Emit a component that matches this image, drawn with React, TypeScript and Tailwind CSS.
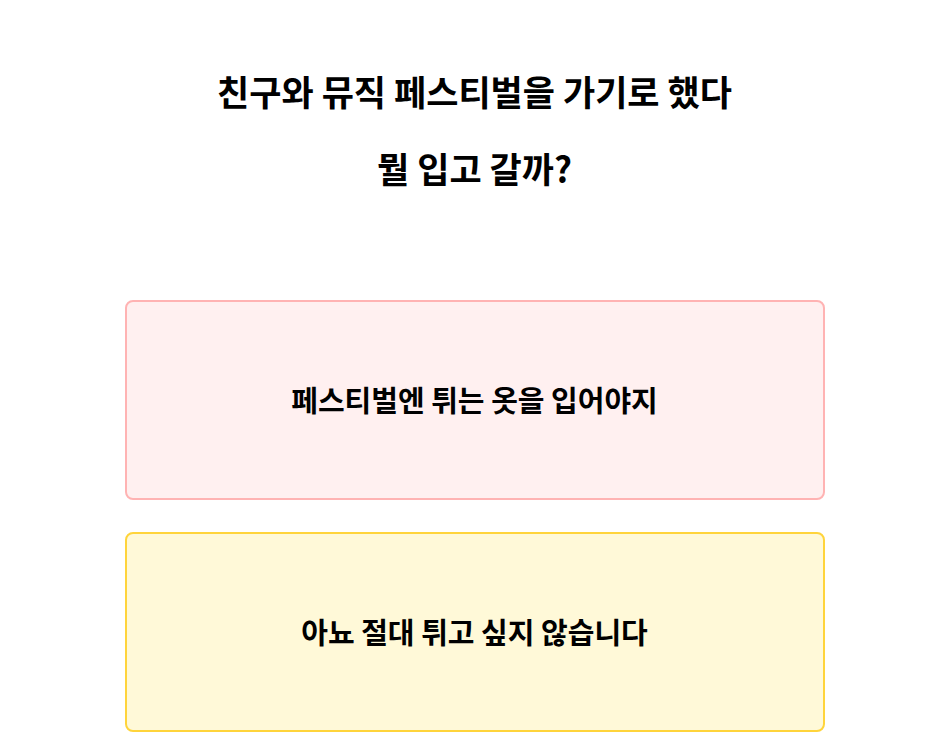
const choices = [
  {
    id: "a",
    label: "페스티벌엔 튀는 옷을 입어야지",
    tone: "border-[#ffb3b3] bg-[#fff0f0]",
  },
  {
    id: "b",
    label: "아뇨 절대 튀고 싶지 않습니다",
    tone: "border-[#ffd43b] bg-[#fff9d8]",
  },
];

export default function App() {
  return (
    <div
      className="min-h-screen bg-white pl-[21px] text-black"
      style={{ fontFamily: '"Noto Sans CJK KR", "Noto Sans", sans-serif' }}
    >
      <div className="mx-auto flex w-[700px] flex-col items-center">
        <div className="mt-[70px] flex flex-col items-center gap-[36px] text-[35px] font-bold leading-[41px]">
          <h1>친구와 뮤직 페스티벌을 가기로 했다</h1>
          <h1>뭘 입고 갈까?</h1>
        </div>

        <div className="mt-[112px] flex w-full flex-col gap-[32px]">
          {choices.map((choice) => (
            <button
              key={choice.id}
              type="button"
              className={`flex h-[200px] w-full items-center justify-center rounded-lg border-2 text-[29px] font-bold ${choice.tone}`}
            >
              {choice.label}
            </button>
          ))}
        </div>
      </div>
    </div>
  );
}
